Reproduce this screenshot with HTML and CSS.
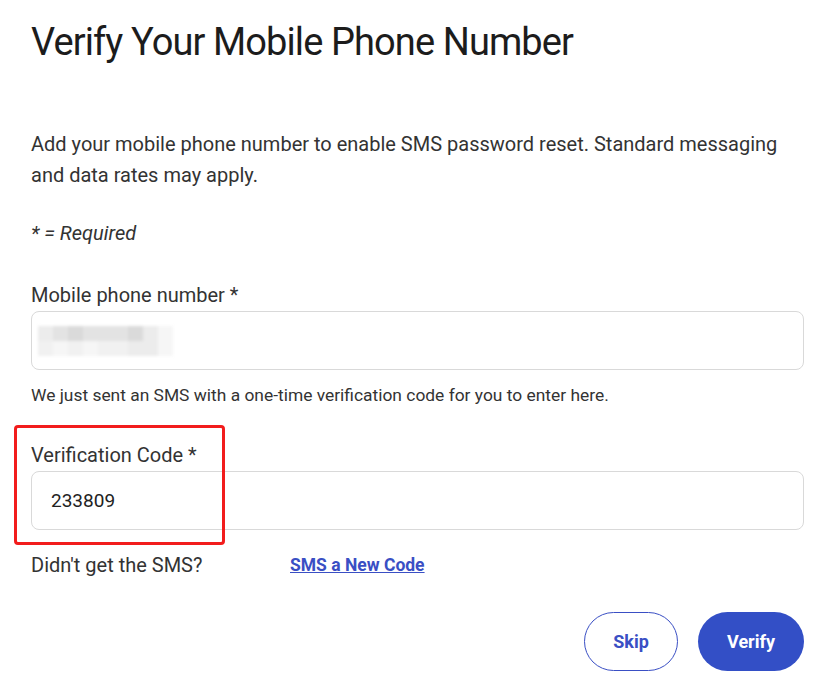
FILE: index.html
```html
<!DOCTYPE html>
<html lang="en">
<head>
<meta charset="utf-8">
<title>Verify Your Mobile Phone Number</title>
<link rel="stylesheet" href="styles.css">
</head>
<body>
<main class="page">
  <h1 class="title">Verify Your Mobile Phone Number</h1>
  <p class="intro">Add your mobile phone number to enable SMS password reset. Standard messaging and data rates may apply.</p>
  <p class="required">* = Required</p>

  <div class="field">
    <label class="label">Mobile phone number *</label>
    <div class="input">
      <div class="mosaic">
        <span class="m a"></span><span class="m b"></span><span class="m c"></span><span class="m b"></span><span class="m b"></span><span class="m b"></span><span class="m c"></span><span class="m a"></span><span class="m e"></span>
        <span class="m d"></span><span class="m e"></span><span class="m d"></span><span class="m e"></span><span class="m d"></span><span class="m d"></span><span class="m a"></span><span class="m a"></span><span class="m e"></span>
      </div>
    </div>
  </div>
  <p class="hint">We just sent an SMS with a one-time verification code for you to enter here.</p>

  <div class="field code-field">
    <div class="highlight"></div>
    <label class="label">Verification Code *</label>
    <div class="input"><span class="value">233809</span></div>
  </div>

  <div class="resend">
    <span class="resend-text">Didn't get the SMS?</span>
    <a class="resend-link" href="#">SMS a New Code</a>
  </div>

  <div class="actions">
    <button class="btn btn-outline">Skip</button>
    <button class="btn btn-primary">Verify</button>
  </div>
</main>
</body>
</html>
```

FILE: styles.css
```css
* { box-sizing: border-box; }
html, body { margin: 0; padding: 0; background: #fff; }
body {
  font-family: Roboto, "Liberation Sans", sans-serif;
  color: #222;
}
.page {
  padding: 18px 27px 0 31px;
  width: 831px;
}
.title {
  margin: 0;
  font-size: 38px;
  font-weight: 400;
  line-height: 48px;
  color: #1c1c1c;
  letter-spacing: -0.9px;
}
.intro {
  margin: 63px 0 0;
  font-size: 20px;
  line-height: 31px;
  color: #333;
}
.required {
  margin: 27px 0 0;
  font-size: 20px;
  line-height: 31px;
  font-style: italic;
  color: #333;
}
.field {
  position: relative;
  margin-top: 34px;
}
.label {
  display: block;
  font-size: 20px;
  line-height: 24px;
  color: #333;
  margin-bottom: 4px;
}
.input {
  height: 59px;
  border: 1px solid #d9d9d9;
  border-radius: 8px;
  display: flex;
  align-items: center;
  padding: 0 19px;
}
.mosaic {
  display: grid;
  grid-template-columns: repeat(9, 15px);
  grid-auto-rows: 15px;
  margin-left: -13px;
  filter: blur(1.5px);
}
.m.a { background: #ececec; }
.m.b { background: #e3e3e3; }
.m.c { background: #dadada; }
.m.d { background: #f1f1f1; }
.m.e { background: #f6f6f6; }
.hint {
  margin: 14px 0 0;
  font-size: 17.4px;
  line-height: 22px;
  color: #333;
}
.code-field {
  margin-top: 37px;
}
.highlight {
  position: absolute;
  left: -17px;
  top: -18px;
  width: 211px;
  height: 120px;
  border: 3px solid #f21c1c;
  border-radius: 4px;
  pointer-events: none;
}
.value {
  font-size: 19px;
  color: #222;
}
.resend {
  display: flex;
  align-items: center;
  margin-top: 23px;
  font-size: 20px;
  line-height: 24px;
}
.resend-text {
  width: 259px;
  color: #333;
}
.resend-link {
  color: #3a4fc4;
  font-weight: 700;
  font-size: 17.5px;
  text-decoration: underline;
}
.actions {
  display: flex;
  justify-content: flex-end;
  gap: 20px;
  margin-top: 35px;
}
.btn {
  height: 59px;
  border-radius: 30px;
  font-family: Roboto, "Liberation Sans", sans-serif;
  font-size: 18px;
  font-weight: 700;
  cursor: pointer;
}
.btn-outline {
  width: 94px;
  background: #fff;
  color: #3a4fc4;
  border: 1.5px solid #3a4fc4;
}
.btn-primary {
  width: 106px;
  background: #334fc6;
  color: #fff;
  border: none;
}
```
